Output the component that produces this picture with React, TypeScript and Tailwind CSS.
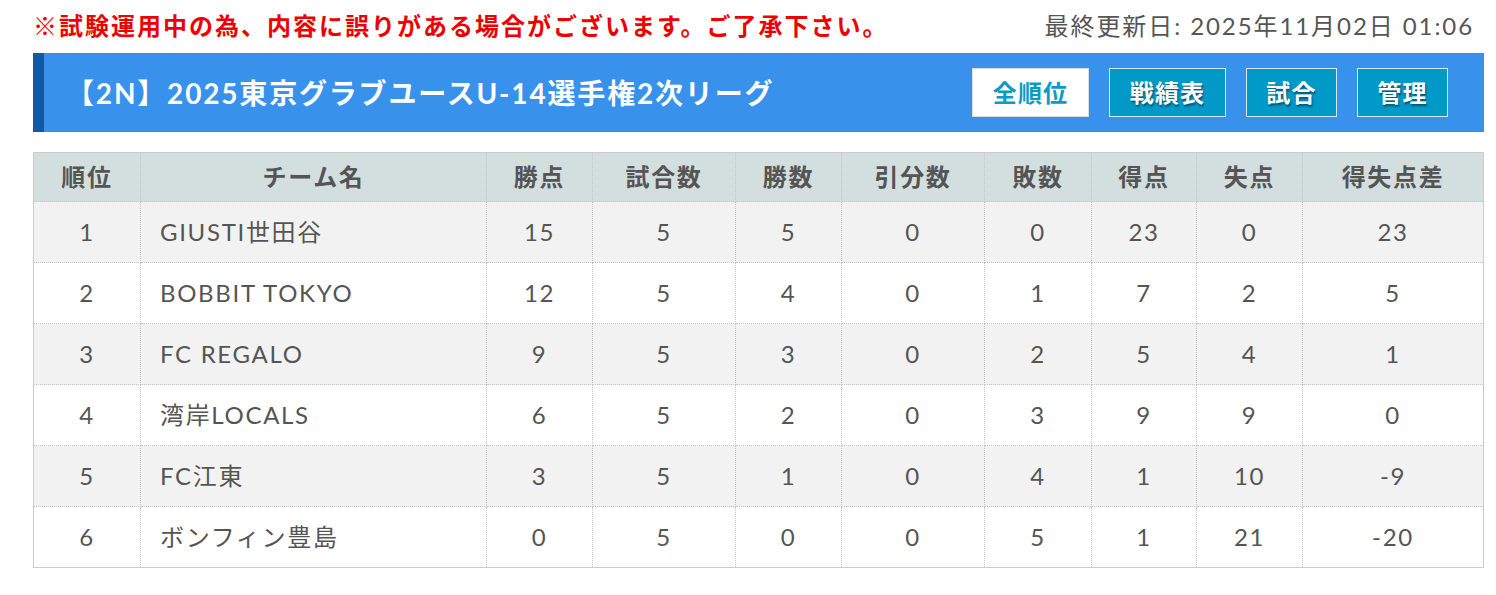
import React from "react";

const rows = [
  { rank: 1, name: "GIUSTI世田谷", pts: 15, games: 5, win: 5, draw: 0, lose: 0, gf: 23, ga: 0, diff: 23 },
  { rank: 2, name: "BOBBIT TOKYO", pts: 12, games: 5, win: 4, draw: 0, lose: 1, gf: 7, ga: 2, diff: 5 },
  { rank: 3, name: "FC REGALO", pts: 9, games: 5, win: 3, draw: 0, lose: 2, gf: 5, ga: 4, diff: 1 },
  { rank: 4, name: "湾岸LOCALS", pts: 6, games: 5, win: 2, draw: 0, lose: 3, gf: 9, ga: 9, diff: 0 },
  { rank: 5, name: "FC江東", pts: 3, games: 5, win: 1, draw: 0, lose: 4, gf: 1, ga: 10, diff: -9 },
  { rank: 6, name: "ボンフィン豊島", pts: 0, games: 5, win: 0, draw: 0, lose: 5, gf: 1, ga: 21, diff: -20 },
];

const headers = [
  { label: "順位", w: "w-[107px]" },
  { label: "チーム名", w: "w-[346px]" },
  { label: "勝点", w: "w-[106px]" },
  { label: "試合数", w: "w-[143px]" },
  { label: "勝数", w: "w-[106px]" },
  { label: "引分数", w: "w-[143px]" },
  { label: "敗数", w: "w-[107px]" },
  { label: "得点", w: "w-[105px]" },
  { label: "失点", w: "w-[106px]" },
  { label: "得失点差", w: "" },
];

const font = "font-['Lato','Noto_Sans_CJK_JP',sans-serif]";

export default function App() {
  const cell = "border border-dotted border-[#c4c4c4] text-center";
  return (
    <div className={`${font} bg-white min-h-[595px] pl-[33px] pr-[12px] pt-[10px] text-[#555]`}>
      <div className="flex items-center justify-between h-[32px]">
        <p className="text-[24px] font-bold text-[#ee0000] tracking-[2px]">
          ※試験運用中の為、内容に誤りがある場合がございます。ご了承下さい。
        </p>
        <p className="text-[24px] tracking-[0.08em] pr-[10px]">最終更新日: 2025年11月02日 01:06</p>
      </div>

      <div className="mt-[11px] flex h-[79px] items-center justify-between border-l-[11px] border-[#1159a3] bg-[#3891eb] pl-[22px] pr-[36px]">
        <h1 className="text-[28px] font-bold text-white tracking-[0.065em]">
          【2N】2025東京グラブユースU-14選手権2次リーグ
        </h1>
        <div className="flex gap-[20px]">
          <button className="h-[49px] w-[117px] border border-[#ddd] bg-white text-[24px] font-bold tracking-[0.05em] text-[#0a9ac9]">
            全順位
          </button>
          {["戦績表", "試合", "管理"].map((t, i) => (
            <button
              key={t}
              className={`h-[49px] ${i === 0 ? "w-[117px]" : "w-[91px]"} border border-[#d8e8f0] bg-[#0099c8] text-[24px] font-bold tracking-[0.05em] text-white [text-shadow:1px_2px_2px_rgba(0,0,0,0.45)]`}
            >
              {t}
            </button>
          ))}
        </div>
      </div>

      <table className="mt-[20px] w-full border-collapse border border-solid border-[#cccccc] text-[24px] tracking-[0.07em]">
        <thead>
          <tr className="h-[49px] bg-[#d3dfdf]">
            {headers.map((h) => (
              <th
                key={h.label}
                className={`${h.w} border-x border-dotted border-[#c4c4c4] border-b border-b-solid border-b-[#c4c4c4] text-center font-bold text-[#555]`}
              >
                {h.label}
              </th>
            ))}
          </tr>
        </thead>
        <tbody>
          {rows.map((r, i) => (
            <tr key={r.rank} className={`h-[61px] ${i % 2 === 0 ? "bg-[#f2f2f2]" : "bg-white"}`}>
              <td className={cell}>{r.rank}</td>
              <td className="border border-dotted border-[#c4c4c4] pl-[19px] text-left">{r.name}</td>
              <td className={cell}>{r.pts}</td>
              <td className={cell}>{r.games}</td>
              <td className={cell}>{r.win}</td>
              <td className={cell}>{r.draw}</td>
              <td className={cell}>{r.lose}</td>
              <td className={cell}>{r.gf}</td>
              <td className={cell}>{r.ga}</td>
              <td className={cell}>{r.diff}</td>
            </tr>
          ))}
        </tbody>
      </table>
    </div>
  );
}
